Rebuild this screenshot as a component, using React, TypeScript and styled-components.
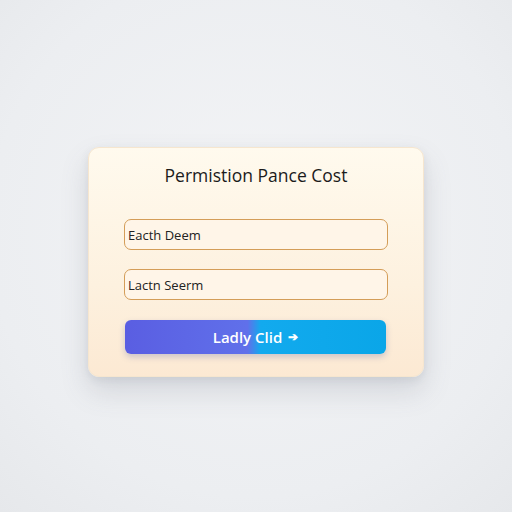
import React from "react"
import styled, { createGlobalStyle } from "styled-components"

const GlobalStyle = createGlobalStyle`
    html, body {
        margin: 0;
        padding: 0;
    }
    body {
        background: radial-gradient(circle at 50% 45%, #f3f4f6 0%, #eceef1 70%, #e6e8eb 100%);
        font-family: "Open Sans", "Noto Sans", sans-serif;
    }
`

const Page = styled.div`
    width: 512px;
    height: 512px;
    display: flex;
    align-items: flex-start;
    justify-content: center;
    padding-top: 147px;
    box-sizing: border-box;
`

const Card = styled.div`
    width: 336px;
    height: 230px;
    box-sizing: border-box;
    padding: 15px 35px 0 35px;
    display: flex;
    flex-direction: column;
    border-radius: 11px;
    background: linear-gradient(180deg, #fffaee 0%, #fdf1df 60%, #fce9d3 100%);
    border: 1px solid #f6e6cf;
    box-shadow:
        0 14px 28px rgba(90, 96, 110, 0.18),
        0 3px 8px rgba(90, 96, 110, 0.1);
`

const Title = styled.h1`
    margin: 0 0 32px 0;
    text-align: center;
    font-size: 17.5px;
    font-weight: 400;
    color: #1b1b1b;
    line-height: 24px;
`

const Field = styled.div<{ $gap: number }>`
    height: 31px;
    box-sizing: border-box;
    margin-bottom: ${({ $gap }) => $gap}px;
    display: flex;
    align-items: center;
    padding-left: 3px;
    border: 1.5px solid #d49d58;
    border-radius: 7px;
    background: #fff5e8;
    font-size: 13px;
    color: #222;
`

const Submit = styled.button`
    height: 34px;
    margin: 0 2px 0 1px;
    border: none;
    border-radius: 6px;
    background: linear-gradient(90deg, #5a5ee2 0%, #6070ea 47%, #12aaee 52%, #0aa6e8 100%);
    box-shadow: 0 3px 6px rgba(60, 80, 160, 0.25);
    color: #fff;
    font-family: "Open Sans", "Noto Sans", sans-serif;
    font-size: 15px;
    font-weight: 600;
    display: flex;
    align-items: center;
    justify-content: center;
    gap: 6px;
`

const Arrow = styled.span`
    font-size: 12px;
    line-height: 1;
`

export default function App() {
    return (
        <>
            <GlobalStyle />
            <Page>
                <Card>
                    <Title>Permistion Pance Cost</Title>
                    <Field $gap={19}>Eacth Deem</Field>
                    <Field $gap={20}>Lactn Seerm</Field>
                    <Submit>
                        Ladly Clid <Arrow>➔</Arrow>
                    </Submit>
                </Card>
            </Page>
        </>
    )
}
